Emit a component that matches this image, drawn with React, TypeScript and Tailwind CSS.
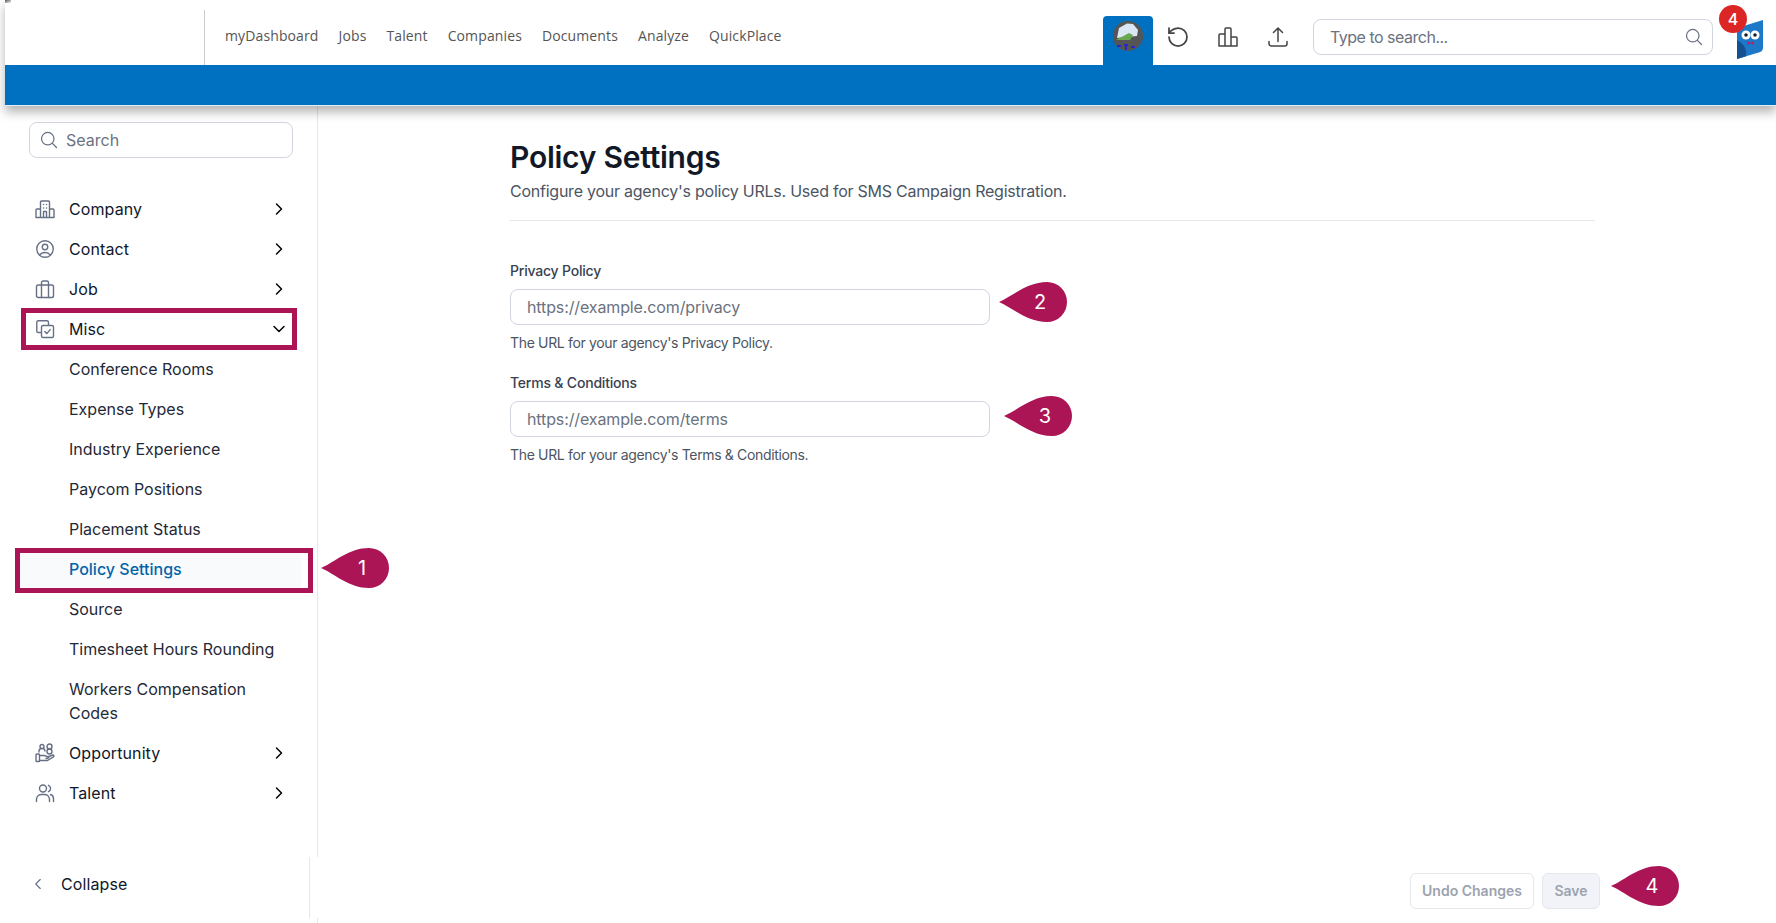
import { ChevronDown, ChevronLeft, ChevronRight, RotateCcw } from "lucide-react";
import { HiOutlineArrowUpTray, HiOutlineMagnifyingGlass, HiOutlineUserCircle } from "react-icons/hi2";

const NAV = ["myDashboard", "Jobs", "Talent", "Companies", "Documents", "Analyze", "QuickPlace"];
const MISC = ["Conference Rooms", "Expense Types", "Industry Experience", "Paycom Positions", "Placement Status"];

function Callout({ n, className }: { n: string; className: string }) {
  return (
    <div className={`absolute h-[40px] w-[68px] ${className}`}>
      <svg viewBox="0 0 68 40" className="absolute inset-0 h-full w-full">
        <path d="M0 20 C14 14 28 0 48 0 A20 20 0 0 1 48 40 C28 40 14 26 0 20Z" fill="#ab1555" />
      </svg>
      <span className="absolute right-[17px] top-0 flex h-[40px] w-[20px] items-center justify-center text-[20px] text-white">{n}</span>
    </div>
  );
}

function OutlineIcon({ children }: { children: React.ReactNode }) {
  return (
    <svg viewBox="0 0 20 20" fill="none" stroke="currentColor" strokeWidth="1.4" strokeLinecap="round" strokeLinejoin="round" className="h-[20px] w-[20px]">
      {children}
    </svg>
  );
}

function SideRow({ icon, label, open }: { icon: React.ReactNode; label: string; open?: boolean }) {
  return (
    <div className="flex h-[40px] items-center pl-[35px] pr-[28px] text-[16px] tracking-[0.1px] text-[#0f172a]">
      <span className="w-[34px] text-[#667085]">{icon}</span>
      <span className="flex-1">{label}</span>
      {open ? <ChevronDown className="h-[20px] w-[20px] text-black" strokeWidth={1.75} /> : <ChevronRight className="h-[20px] w-[20px] text-black" strokeWidth={1.75} />}
    </div>
  );
}

function Field({ label, placeholder, help }: { label: string; placeholder: string; help: string }) {
  return (
    <div>
      <label className="block h-[20px] text-[14px] font-medium leading-[20px] tracking-[-0.2px] text-[#374151]">{label}</label>
      <input
        placeholder={placeholder}
        className="mt-[8px] block h-[36px] w-[480px] rounded-[8px] border border-[#d1d5e0] px-[16px] text-[16px] tracking-[-0.12px] outline-none placeholder:text-[#6b7280]"
      />
      <p className="mt-[8px] text-[14px] leading-[20px] tracking-[-0.34px] text-[#4b5563]">{help}</p>
    </div>
  );
}

export default function App() {
  return (
    <div className="relative flex h-[923px] w-[1776px] flex-col overflow-hidden bg-white font-['Inter',sans-serif]">
      <div className="absolute left-[5px] top-0 z-20 h-[3px] w-[6px] bg-gradient-to-br from-[#555555] to-white" />

      {/* Header */}
      <header className="z-10 ml-[5px] shadow-[0_6px_10px_rgba(0,0,0,0.3)]">
        <div className="flex h-[65px] items-stretch bg-white">
          <div className="w-[199px]" />
          <div className="mt-[10px] w-px bg-[#cccccc]" />
          <nav className="flex items-center gap-[20px] pl-[20px] pt-[5px] font-['Open_Sans',sans-serif] text-[14px] tracking-[0.12px] text-[#555555]">
            {NAV.map((n) => (
              <span key={n}>{n}</span>
            ))}
          </nav>
          <div className="ml-auto flex items-end">
            <div className="flex h-[49px] w-[50px] items-start justify-center rounded-t-[4px] bg-[#0070c0] pt-[5px]">
              <svg viewBox="0 0 30 30" className="h-[30px] w-[30px]">
                <circle cx="15" cy="15" r="15" fill="#555555" />
                <path d="M4 17 L6 7 L14 2.500 L20 3 L25 9 L24 15Z" fill="#dbe7f5" />
                <path d="M3 19 L16 12 L20 14 L17 19Z" fill="#6aa84f" />
                <path d="M4 25 H8 M11 24 H15 M13 24 V29 M18 26 H22" stroke="#1a1ae6" strokeWidth="1.5" />
              </svg>
            </div>
            <div className="flex h-[65px] w-[50px] items-center justify-center pt-[8px] text-[#444444]">
              <RotateCcw className="h-[24px] w-[24px]" strokeWidth={1.75} />
            </div>
            <div className="flex h-[65px] w-[50px] items-center justify-center pt-[8px] text-[#444444]">
              <svg viewBox="0 0 20 20" fill="none" stroke="currentColor" strokeWidth="1.5" strokeLinejoin="round" className="h-[20px] w-[20px]">
                <path d="M1 19 V8 Q1 7 2 7 H7 V2 Q7 1 8 1 H12 Q13 1 13 2 V10 H18 Q19 10 19 11 V19 Z M7 7 V19 M13 10 V19" />
              </svg>
            </div>
            <div className="flex h-[65px] w-[50px] items-center justify-center pt-[8px] text-[#444444]">
              <HiOutlineArrowUpTray className="h-[24px] w-[24px]" />
            </div>
          </div>
          <div className="ml-[10px] flex items-center pt-[9px]">
            <div className="flex h-[36px] w-[400px] items-center rounded-[8px] border border-[#d1d5e0] pl-[16px] pr-[8px]">
              <span className="flex-1 text-[16px] tracking-[-0.5px] text-[#6b7280]">Type to search...</span>
              <HiOutlineMagnifyingGlass className="h-[20px] w-[20px] text-[#6b7280]" />
            </div>
          </div>
          <div className="relative w-[63px]">
            <svg viewBox="0 0 26 39" className="absolute left-[24px] top-[20px] h-[39px] w-[26px]">
              <path d="M0 8 L26 0 V28 Q26 32 20 33 L0 39Z" fill="#1e78c8" />
              <path d="M0 20 Q11 26 9 36.300 L0 39Z" fill="#12508f" />
              <circle cx="9" cy="15" r="4.500" fill="#fff" />
              <circle cx="18" cy="15" r="4.500" fill="#fff" />
              <circle cx="9" cy="15" r="1.800" fill="#123" />
              <circle cx="18" cy="15" r="1.800" fill="#123" />
              <path d="M10.500 21 L13.500 23 L16.500 21 V25 L13.500 23 L10.500 25Z" fill="#c2185b" />
            </svg>
            <span className="absolute left-[6px] top-[5px] flex h-[28px] w-[28px] items-center justify-center rounded-full bg-[#dc2626] text-[16px] font-medium text-white">4</span>
          </div>
        </div>
        <div className="h-[41px] border-b border-[#e3edf7] bg-[#0070c0]" />
      </header>

      <div className="flex min-h-0 flex-1">
        {/* Sidebar */}
        <aside className="flex w-[318px] flex-col">
          <div className="flex-1 border-r border-[#e5e7eb]">
            <div className="px-[29px] pt-[16px]">
              <div className="flex h-[36px] w-[264px] items-center gap-[7px] rounded-[8px] border border-[#d1d5e0] pl-[9px]">
                <HiOutlineMagnifyingGlass className="h-[20px] w-[20px] text-[#667085]" />
                <span className="text-[16px] text-[#6b7280]">Search</span>
              </div>
            </div>
            <div className="mt-[31px]">
              <SideRow
                label="Company"
                icon={
                  <OutlineIcon>
                    <path d="M1 18.500 H19 M5.500 18.500 V3 Q5.500 2 6.500 2 H13.500 Q14.500 2 14.500 3 V18.500 M5.500 10 H2 Q1 10 1 11 V18.500 M14.500 10 H18 Q19 10 19 11 V18.500 M8.500 5.500 H8.600 M11.500 5.500 H11.600 M8.500 9 H8.600 M11.500 9 H11.600 M8.500 12.500 H11.500 V18.500 M8.500 12.500 V18.500" />
                  </OutlineIcon>
                }
              />
              <SideRow icon={<HiOutlineUserCircle className="-ml-[1px] h-[22px] w-[22px]" />} label="Contact" />
              <SideRow
                label="Job"
                icon={
                  <OutlineIcon>
                    <rect x="1.500" y="6" width="17" height="12.500" rx="1.800" />
                    <path d="M6.500 6 V3.600 C6.500 2.700 7.200 2 8.100 2 H11.900 C12.800 2 13.500 2.700 13.500 3.600 V6 M6.500 6 V18.500 M13.500 6 V18.500" />
                  </OutlineIcon>
                }
              />
              <SideRow
                label="Misc"
                open
                icon={
                  <OutlineIcon>
                    <path d="M5.500 13.500 H3.400 C2.500 13.500 1.800 12.800 1.800 11.900 V3.400 C1.800 2.500 2.500 1.800 3.400 1.800 H11.900 C12.800 1.800 13.500 2.500 13.500 3.400 V5.500" />
                    <rect x="6.500" y="6.500" width="12" height="12" rx="1.600" />
                    <path d="M9.800 12.600 L11.800 14.600 L15.200 10.600" />
                  </OutlineIcon>
                }
              />
              {MISC.map((m) => (
                <div key={m} className="flex h-[40px] items-center pl-[69px] text-[16px] text-[#1f2937]">{m}</div>
              ))}
              <div className="mx-[16px] flex h-[40px] items-center bg-[#f8fafc] pl-[53px] text-[16px] font-medium text-[#0064a8]">Policy Settings</div>
              {["Source", "Timesheet Hours Rounding"].map((m) => (
                <div key={m} className="flex h-[40px] items-center pl-[69px] text-[16px] text-[#1f2937]">{m}</div>
              ))}
              <div className="py-[8px] pl-[69px] pr-[40px] text-[16px] leading-[24px] text-[#1f2937]">Workers Compensation Codes</div>
              <SideRow
                label="Opportunity"
                icon={
                  <OutlineIcon>
                    <rect x="1" y="11" width="3.500" height="7.500" rx="0.800" />
                    <path d="M4.500 12.500 H9 Q10.500 12.500 11.500 13.500 H14 M4.500 17.500 H12.500 L18.500 13.800 Q19.500 12.500 18 12 L14 13.500 Q14 15.500 11 15.500" />
                    <circle cx="14.500" cy="3.500" r="2.500" />
                    <circle cx="14.500" cy="8.500" r="2.500" />
                    <path d="M4 9 V8 Q4 5.500 7 5.500 Q10 5.500 10 8 M7 5.500 A2 2 0 1 0 7 1.500 A2 2 0 1 0 7 5.500" />
                  </OutlineIcon>
                }
              />
              <SideRow
                label="Talent"
                icon={
                  <OutlineIcon>
                    <circle cx="8" cy="5.500" r="3.500" />
                    <path d="M1.500 18.500 V16 A5 5 0 0 1 6.500 11.500 H9.500 A5 5 0 0 1 14.500 16 V18.500 M13.500 2.300 A3.500 3.500 0 0 1 13.500 8.700 M15.500 11.500 A4.500 4.500 0 0 1 18.500 15.800 V18.500" />
                  </OutlineIcon>
                }
              />
            </div>
          </div>
          <div className="flex h-[61px] w-[310px] items-center border-r border-[#e5e7eb] pb-[7px] pl-[29px] text-[16px] tracking-[0.1px] text-[#0f172a]">
            <ChevronLeft className="mr-[14px] h-[18px] w-[18px] text-[#667085]" strokeWidth={1.5} />
            Collapse
          </div>
          <div className="h-[5px] border-r border-[#e5e7eb]" />
        </aside>

        {/* Main */}
        <main className="flex min-w-0 flex-1 flex-col pl-[192px] pr-[181px]">
          <h1 className="mt-[32px] text-[30px] font-semibold leading-[38px] tracking-[-0.25px] text-[#111827]">Policy Settings</h1>
          <p className="mt-[3px] text-[16px] leading-[24px] tracking-[-0.24px] text-[#4b5563]">Configure your agency's policy URLs. Used for SMS Campaign Registration.</p>
          <div className="mt-[17px] h-px bg-[#e5e7eb]" />
          <div className="mt-[40px] flex flex-col gap-[20px]">
            <Field label="Privacy Policy" placeholder="https://example.com/privacy" help="The URL for your agency's Privacy Policy." />
            <Field label="Terms &amp; Conditions" placeholder="https://example.com/terms" help="The URL for your agency's Terms &amp; Conditions." />
          </div>
          <div className="-mr-[5px] mt-auto mb-[14px] flex justify-end gap-[8px]">
            <button className="h-[36px] w-[124px] rounded-[6px] border border-[#e5e7eb] bg-white pb-[1px] text-[14px] font-semibold text-[#9ca3af]">Undo Changes</button>
            <button className="h-[36px] w-[58px] rounded-[6px] border border-[#e5e7eb] bg-[#f1f3f8] pb-[1px] text-[14px] font-semibold text-[#9ca3af]">Save</button>
          </div>
        </main>
      </div>

      {/* Tutorial annotations */}
      <div className="pointer-events-none absolute left-[21px] top-[308px] h-[42px] w-[276px] border-[5px] border-[#ab1555]" />
      <div className="pointer-events-none absolute left-[15px] top-[548px] h-[45px] w-[298px] border-[5px] border-[#ab1555]" />
      <Callout n="1" className="left-[321px] top-[548px]" />
      <Callout n="2" className="left-[999px] top-[282px]" />
      <Callout n="3" className="left-[1004px] top-[396px]" />
      <Callout n="4" className="left-[1611px] top-[866px]" />
    </div>
  );
}
